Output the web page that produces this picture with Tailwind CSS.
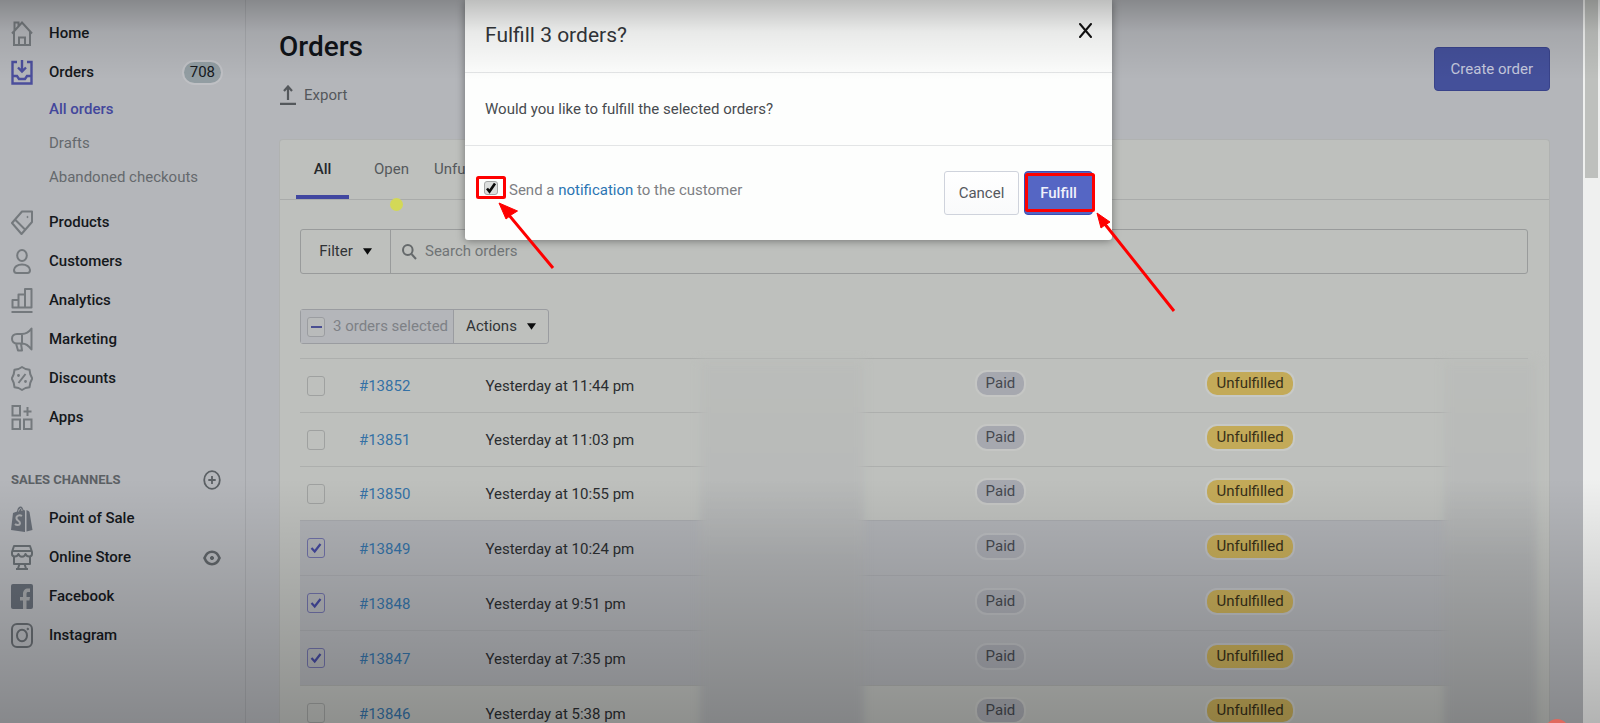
<!DOCTYPE html>
<html lang="en">
<head>
<meta charset="utf-8">
<meta name="viewport" content="width=device-width, initial-scale=1">
<title>Orders</title>
<script src="https://cdn.jsdelivr.net/npm/@tailwindcss/browser@4"></script>
</head>
<body class="h-screen overflow-hidden bg-[#b4b6ba] font-['Roboto','Noto_Sans',sans-serif] text-[15px] text-[#15181c]">
<div class="flex h-full">

  <!-- Sidebar -->
  <nav aria-label="Main" class="flex w-[246px] shrink-0 flex-col overflow-hidden border-r border-[#a6a8ac] pt-[14px] pr-6 pl-[11px] font-medium">
    <a href="#" class="flex h-[39px] shrink-0 items-center gap-4">
      <svg class="h-[25px] w-[22px] text-[#74797d]" viewBox="0 0 22 25" fill="none" stroke="currentColor" stroke-width="2"><path d="M1 12.500 11 1.500 21 12.500M3 10.500V24h16V10.500M8 24v-7.500h6V24M3.500 9V1.500h4v3.500"/></svg>
      Home
    </a>
    <a href="#" class="flex h-[39px] shrink-0 items-center gap-4">
      <svg class="h-[25px] w-[22px] text-[#4b4e9c]" viewBox="0 0 22 25" fill="none" stroke="currentColor" stroke-width="2.400"><path d="M6 2H1.500v21.500h19V2H16M11 0v11M7 7.500l4 4 4-4M1.500 16H6l2 3h6l2-3h4.500"/></svg>
      <span class="grow">Orders</span>
      <span class="rounded-full bg-[#929da2] px-[6px] leading-[21px] font-normal ring-2 ring-white/15">708</span>
    </a>
    <div class="mb-[9px] flex shrink-0 flex-col pl-[38px] leading-[34px] text-[#65696d]">
      <a href="#" class="text-[#43479c]">All orders</a>
      <a href="#" class="font-normal">Drafts</a>
      <a href="#" class="font-normal">Abandoned checkouts</a>
    </div>
    <a href="#" class="flex h-[39px] shrink-0 items-center gap-4">
      <svg class="h-[25px] w-[22px] text-[#74797d]" viewBox="0 0 22 25" fill="none" stroke="currentColor" stroke-width="2" stroke-linejoin="round"><path d="M11 1.500h10v10.500L10.500 24 1 13zM4 9.500 14.500 20"/><circle cx="16.500" cy="7" r=".6" fill="currentColor" stroke-width="1"/></svg>
      Products
    </a>
    <a href="#" class="flex h-[39px] shrink-0 items-center gap-4">
      <svg class="h-[25px] w-[22px] text-[#74797d]" viewBox="0 0 22 25" fill="none" stroke="currentColor" stroke-width="2"><ellipse cx="11" cy="6.500" rx="4.800" ry="5.500"/><path d="M11 15.500c4.500 0 8 2.500 8 5.500 0 2-1 3-2.500 3h-11C4 24 3 23 3 21c0-3 3.500-5.500 8-5.500z"/></svg>
      Customers
    </a>
    <a href="#" class="flex h-[39px] shrink-0 items-center gap-4">
      <svg class="h-[25px] w-[22px] text-[#74797d]" viewBox="0 0 22 25" fill="none" stroke="currentColor" stroke-width="2" stroke-linejoin="round"><path d="M1.500 12h6v7.500h-6zM7.500 6.500h6.500v13H7.500zM14 1h6.500v18.500H14zM.5 24h21"/></svg>
      Analytics
    </a>
    <a href="#" class="flex h-[39px] shrink-0 items-center gap-4">
      <svg class="h-[25px] w-[22px] text-[#74797d]" viewBox="0 0 22 25" fill="none" stroke="currentColor" stroke-width="2" stroke-linejoin="round"><path d="M6 7h5c4 0 7-2 9.500-5.500v21C18 19 15 16.500 11 16.500H6c-3 0-5-2-5-4.750S3 7 6 7zM11 7v9.500M5 16.500l2 7h4l-1-7"/></svg>
      Marketing
    </a>
    <a href="#" class="flex h-[39px] shrink-0 items-center gap-4">
      <svg class="h-[25px] w-[22px] text-[#74797d]" viewBox="0 0 22 25" fill="none" stroke="currentColor" stroke-width="2" stroke-linejoin="round"><path d="m11 1 3.500 2 4 .8.8 4.500 2 4.200-2 4.200-.8 4.500-4 .8-3.500 2-3.500-2-4-.8-.8-4.500-2-4.200 2-4.200.8-4.500 4-.8zM7.500 17l7-9"/><circle cx="7.500" cy="9.500" r=".8" fill="currentColor" stroke-width="1.200"/><circle cx="14.500" cy="15.500" r=".8" fill="currentColor" stroke-width="1.200"/></svg>
      Discounts
    </a>
    <a href="#" class="flex h-[39px] shrink-0 items-center gap-4">
      <svg class="h-[25px] w-[22px] text-[#74797d]" viewBox="0 0 22 25" fill="none" stroke="currentColor" stroke-width="2"><path d="M1.500 1h7.500v9.500H1.500zM1.500 14.500h7.500V24H1.500zM13 14.500h7.500V24H13zM16.500 2v9M12.500 6.500h8"/></svg>
      Apps
    </a>
    <div class="mt-[23px] flex h-[39px] shrink-0 items-center justify-between text-[13px] font-bold text-[#5b6064]">
      <h2>SALES CHANNELS</h2>
      <button type="button" aria-label="Add channel">
        <svg class="h-5 w-[18px]" viewBox="0 0 18 20" fill="none" stroke="currentColor" stroke-width="1.800"><ellipse cx="9" cy="10" rx="7.800" ry="8.800"/><path d="M9 6v8M5.300 10h7.400"/></svg>
      </button>
    </div>
    <a href="#" class="flex h-[39px] shrink-0 items-center gap-4">
      <svg class="h-[26px] w-[22px] text-[#676d76]" viewBox="0 0 22 26"><path fill="currentColor" d="M0 24 2 7l4-1.500C6.500 2 8 0 10 .5c1.500.5 2 2 2.500 3.500l1.500.5V26zM15.500 4l2 1 1 1 3 18-6 1.500z"/><path d="M11 10c-2.500-1.500-6-.5-5.500 2.500.4 2.200 4 2.500 3.500 5-.4 2-3.500 2-5 .5" fill="none" stroke="#abadb0" stroke-width="2"/><path d="M7.500 5.500C8 3.500 9 2 10 2.500c.8.500.8 1.500 1 2.500" fill="none" stroke="#abadb0"/></svg>
      Point of Sale
    </a>
    <a href="#" class="flex h-[39px] shrink-0 items-center gap-4">
      <svg class="h-[25px] w-[22px] text-[#686e73]" viewBox="0 0 22 25" fill="none" stroke="currentColor" stroke-width="2" stroke-linejoin="round"><path d="M3 1h16l2 6v2c0 3-5 3.500-6.500 0-1 3.500-6 3.500-7 0C6 12.500 1 12 1 9V7zM1 6h20M3 11.500V19h16v-7.500M8.500 19 7 23.500M13.500 19l1.500 4.500M5 24h12"/></svg>
      <span class="grow">Online Store</span>
      <svg class="h-4 w-[18px] text-[#5f6468]" viewBox="0 0 18 16" fill="none" stroke="currentColor" stroke-width="2.600"><path d="M1.500 8C3 4 6 1.800 9 1.800S15 4 16.500 8C15 12 12 14.200 9 14.200S3 12 1.500 8z"/><circle cx="9" cy="8" r="1.600" fill="currentColor" stroke-width="1"/></svg>
    </a>
    <a href="#" class="flex h-[39px] shrink-0 items-center gap-4">
      <svg class="h-[25px] w-[22px]" viewBox="0 0 22 25"><rect width="22" height="25" rx="2" fill="#636a74"/><path d="M12 25v-8.500H9V13h3v-3C12 6.500 14 4.500 17 4.500h2V8h-1.700c-1.300 0-1.800.6-1.800 2v3H19l-.6 3.500h-2.900V25z" fill="#a3a5a8"/></svg>
      Facebook
    </a>
    <a href="#" class="flex h-[39px] shrink-0 items-center gap-4">
      <svg class="h-[25px] w-[22px] text-[#666b70]" viewBox="0 0 22 25" fill="none" stroke="currentColor" stroke-width="2"><rect x="1" y="1" width="20" height="23" rx="5"/><ellipse cx="11" cy="12.500" rx="5" ry="5.800"/><circle cx="16.800" cy="6" r=".8" fill="currentColor" stroke-width="1"/></svg>
      Instagram
    </a>
  </nav>

  <!-- Page content -->
  <main class="flex min-w-0 grow flex-col px-[33px]">
    <header class="flex shrink-0 items-start justify-between">
      <div class="pt-[27px]">
        <h1 class="text-[28px] leading-10 font-medium text-[#101318]">Orders</h1>
        <button type="button" class="mt-4 flex items-center gap-[7px] leading-6 text-[#54585c]">
          <svg class="h-5 w-[18px]" viewBox="0 0 18 20" fill="none" stroke="currentColor" stroke-width="2.200"><path d="M9 15V1.500M5 6l4-4.500L13 6M1 18.800h16"/></svg>
          Export
        </button>
      </div>
      <button type="button" class="mt-[47px] h-11 rounded-sm border border-[#39438a] bg-[#44509a] px-4 text-[#c3c7dc]">Create order</button>
    </header>

    <section class="relative mt-8 min-h-0 grow overflow-hidden rounded-t border border-b-0 border-[#b0b2b1] bg-[#bec0bd]">
      <div class="flex h-[60px] items-stretch border-b border-[#a9abaa] pl-4">
        <a href="#" aria-current="page" class="flex w-[53px] items-center justify-center border-b-4 border-[#4147a0] pt-1 font-medium text-[#25282b]">All</a>
        <a href="#" class="flex w-[85px] items-center justify-center text-[#55595c]">Open</a>
        <a href="#" class="flex items-center text-[#55595c]">Unfulfilled</a>
      </div>
      <span class="absolute top-[58px] left-[110px] size-[13px] rounded-full bg-[#d3d857]"></span>

      <div class="pt-[29px] pr-[21px] pl-5">
        <div class="flex h-[45px] rounded-[3px] border border-[#999b9b]">
          <button type="button" class="flex w-[90px] items-center justify-center gap-[10px] border-r border-[#999b9b] text-[#303336]">Filter
            <svg class="h-[7px] w-[9px]" viewBox="0 0 10 7"><path d="M0 0h10L5 7z" fill="#0b0c0d"/></svg>
          </button>
          <label for="search" class="flex items-center pr-2 pl-[11px] text-[#65696b]">
            <svg class="h-4 w-[15px]" viewBox="0 0 15 16" fill="none" stroke="currentColor" stroke-width="2" aria-label="Search"><ellipse cx="5.800" cy="6" rx="4.800" ry="5"/><path d="m9.500 10 4.500 5"/></svg>
          </label>
          <input id="search" type="text" placeholder="Search orders" class="min-w-0 grow bg-transparent outline-none placeholder:text-[#707476]">
        </div>

        <div class="mt-[35px] flex h-[35px] w-[249px] rounded-[3px] border border-[#9a9ca0]">
          <label class="flex w-[153px] items-center gap-2 border-r border-[#9a9ca0] bg-[#b4b6ba] pl-[6px] whitespace-nowrap text-[#7e8186]">
            <span class="relative grid h-[20px] w-[18px] shrink-0 place-items-center">
              <input type="checkbox" class="absolute inset-0 appearance-none rounded-[3px] border border-[#9b9da1] bg-[#b9bbbb]">
              <span class="relative h-[2px] w-[11px] bg-[#4a4f92]"></span>
            </span>
            3 orders selected
          </label>
          <button type="button" class="flex grow items-center justify-center gap-[10px] text-[#303336]">Actions
            <svg class="h-[7px] w-[9px]" viewBox="0 0 10 7"><path d="M0 0h10L5 7z" fill="#0b0c0d"/></svg>
          </button>
        </div>

        <div class="relative mt-[14px]">
          <table class="w-full table-fixed border-collapse text-left">
            <colgroup><col class="w-[4.8%]"><col class="w-[10.3%]"><col class="w-[17.5%]"><col class="w-[22.5%]"><col class="w-[18.8%]"><col class="w-[19.3%]"><col></colgroup>
            <tbody id="rows" class="text-[#2a2d30]"></tbody>
          </table>
          <!-- Redacted customer and total columns -->
          <div class="absolute top-[2px] left-[32.6%] h-[400px] w-[13.3%] bg-linear-to-b from-[#bbbdba] from-0% via-[#b8bab9] via-30% to-[#afb1b3] to-50% blur-[4px]"></div>
          <div class="absolute top-[2px] left-[93.2%] h-[400px] w-[7.5%] bg-linear-to-b from-[#bbbdba] from-0% via-[#b8bab9] via-30% to-[#afb1b2] to-50% blur-[4px]"></div>
        </div>
      </div>
    </section>
  </main>

  <!-- Scroll track -->
  <div class="w-[17px] shrink-0 bg-[#eff0ef] px-[2px]"><div class="h-[178px] bg-[#bec0bd]"></div></div>
</div>

<!-- Dialog -->
<div class="absolute inset-x-0 top-0 flex justify-center pr-[23px]">
  <div role="dialog" aria-labelledby="dialog-title" class="relative w-[647px] rounded-b-[3px] bg-[#fdfefd] shadow-[0_1px_8px_rgba(0,0,0,0.4)]">
    <div class="flex h-[73px] items-center justify-between border-b border-[#e3e5e6] pr-[20px] pl-[20px]">
      <h2 id="dialog-title" class="text-[21px] text-[#33363a]">Fulfill 3 orders?</h2>
      <button type="button" aria-label="Close" class="mb-3">
        <svg class="h-[15px] w-[13px]" viewBox="0 0 13 15" stroke="#111" stroke-width="2" stroke-linecap="round"><path d="m1 1 11 13M12 1 1 14"/></svg>
      </button>
    </div>
    <p class="flex h-[73px] items-center border-b border-[#e3e5e6] px-[20px] text-[#484b4f]">Would you like to fulfill the selected orders?</p>
    <div class="flex h-[94px] items-center justify-between px-[19px]">
      <div class="flex items-center gap-[11px] pb-[6px] text-[#7d8084]">
        <span class="relative mb-1 block size-[14px]">
          <input id="notify" type="checkbox" checked class="absolute inset-0 appearance-none rounded-[3px] border border-[#a5a7a7] bg-[#dcdedd]">
          <svg class="pointer-events-none absolute inset-0 size-[14px]" viewBox="0 0 14 14" fill="none" stroke="#0a0a0a" stroke-width="2.600"><path d="m3 7.500 2.500 3L11 2.500"/></svg>
        </span>
        <label for="notify">Send a <a href="#" class="text-[#2b75b3]">notification</a> to the customer</label>
      </div>
      <div class="flex gap-[5px]">
        <button type="button" class="h-11 w-[75px] rounded-[3px] border border-[#cfd3dc] bg-linear-to-b from-white to-[#f9fafb] text-[#55585d]">Cancel</button>
        <button type="button" class="h-11 w-[69px] rounded-[4px] border border-[#3a4fb5] bg-[#5566c4] font-medium text-[#f0f1fb]">Fulfill</button>
      </div>
    </div>
  </div>
</div>

<!-- Shading towards the top and bottom edges -->
<div class="pointer-events-none absolute inset-0 flex flex-col justify-between overflow-hidden">
  <div class="h-[80px] bg-linear-to-b from-black/25 via-black/8 via-40% to-transparent"></div>
  <div class="h-[245px] bg-linear-to-t from-black/25 to-transparent"></div>
  <span class="absolute -bottom-5 left-[1545px] size-[24px] rounded-full bg-[#e0695e]"></span>
</div>

<!-- Callouts over the dialog -->
<div class="pointer-events-none absolute inset-x-0 top-0 flex justify-center pr-[23px]">
  <svg class="h-[240px] w-[647px] overflow-visible" fill="none" stroke="#fe0000" stroke-width="3">
    <rect x="12.500" y="177.500" width="27" height="20" rx="1"/>
    <rect x="561.500" y="174.500" width="67" height="36" rx="1"/>
    <path d="M88 268 43 214M709 311 639 223"/>
    <path d="M34 203 52.500 211 46 215 41 219zM632 213 645 222 640 225 636 228z" fill="#fe0000" stroke-width="1"/>
  </svg>
</div>

<script>
  const orders = [
    ['#13852', '11:44 pm', false],
    ['#13851', '11:03 pm', false],
    ['#13850', '10:55 pm', false],
    ['#13849', '10:24 pm', true],
    ['#13848', '9:51 pm', true],
    ['#13847', '7:35 pm', true],
    ['#13846', '5:38 pm', false],
  ];
  const tick = '<svg class="pointer-events-none absolute inset-0 h-[20px] w-[18px]" viewBox="0 0 18 20" fill="none" stroke="#44489c" stroke-width="2.200"><path d="m4.500 10 3.200 3.500L13.500 6"/></svg>';
  document.getElementById('rows').innerHTML = orders.map(([id, time, on]) => `
    <tr class="border-t ${on ? 'h-[55px] border-[#a7a9ad] bg-[#b0b2b6]' : 'h-[54px] border-[#adafad]'}">
      <td class="pl-[7px]"><span class="relative block h-[20px] w-[18px]"><input type="checkbox" aria-label="Select ${id}" ${on ? 'checked' : ''} class="absolute inset-0 appearance-none rounded-[3px] border ${on ? 'border-[#6f70a6]' : 'border-[#9fa1a0]'}">${on ? tick : ''}</span></td>
      <td class="pt-[2px]"><a href="#" class="text-[#3471a5]">${id}</a></td>
      <td class="pt-[2px] whitespace-nowrap">Yesterday at ${time}</td>
      <td></td>
      <td class="pb-1"><span class="inline-block rounded-[10px] bg-[#a6a8af] px-[9px] leading-[23px] text-[#45484f] ring-2 ring-white/10">Paid</span></td>
      <td class="pb-1"><span class="inline-block rounded-[10px] bg-[#c3aa58] px-[9px] leading-[23px] text-[#373018] ring-2 ring-white/15">Unfulfilled</span></td>
      <td></td>
    </tr>`).join('');
</script>
</body>
</html>
